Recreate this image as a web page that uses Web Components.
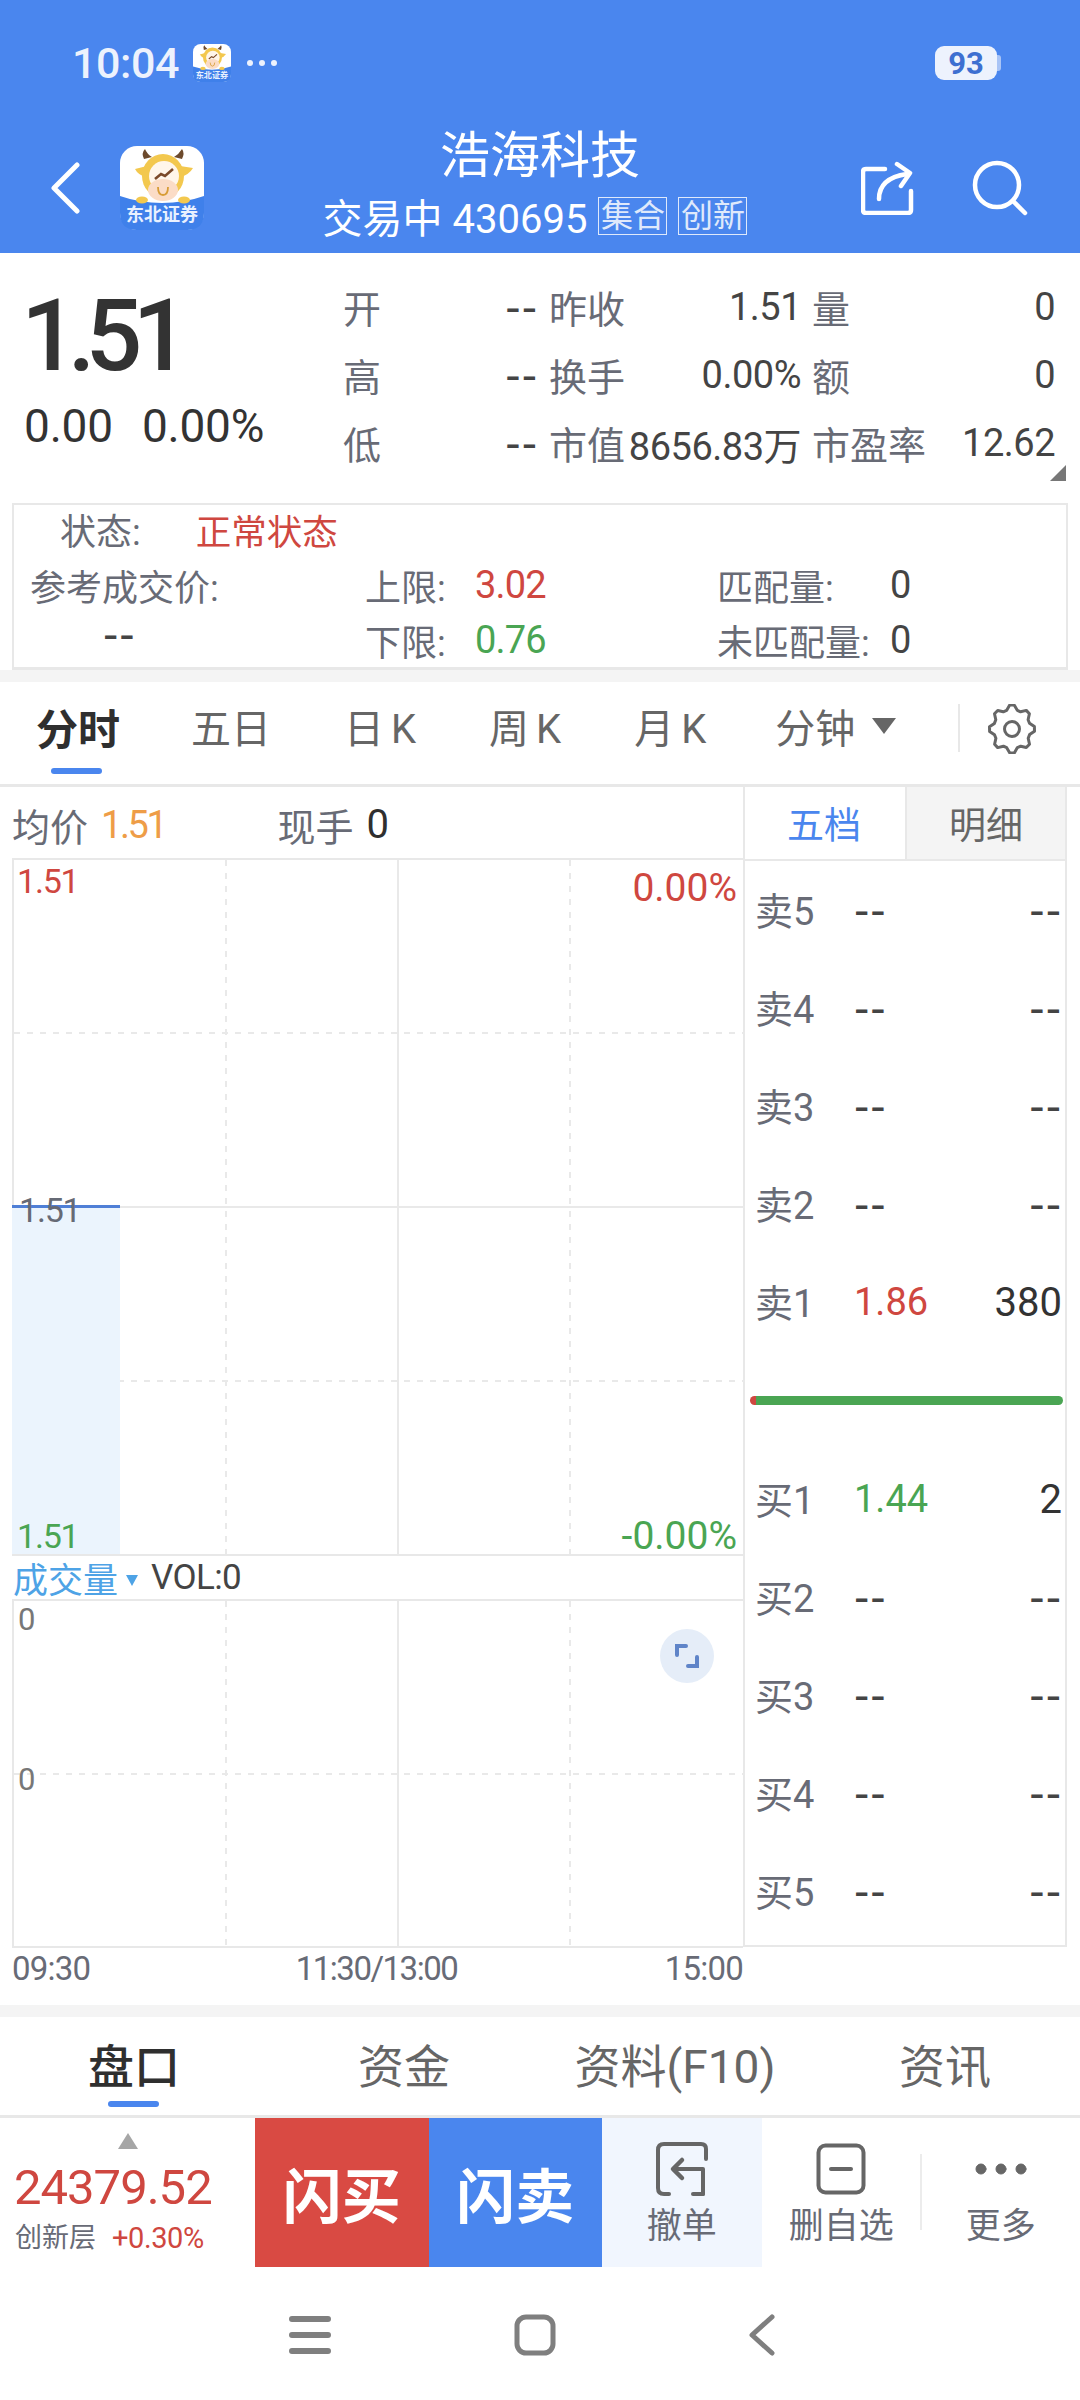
<!DOCTYPE html>
<html lang="zh">
<head>
<meta charset="utf-8">
<title>浩海科技</title>
<style>
    html, body { margin: 0; padding: 0; background: #fff; }
    body {
        width: 1080px;
        height: 2400px;
        overflow: hidden;
        font-family: Roboto, "Noto Sans CJK SC", sans-serif;
        color: #333;
        --blue: #4a86ee;
        --red: #cf4740;
        --green: #4aa553;
        --muted: #686b76;
        --line: #e8e8e8;
        --band: #f4f4f4;
    }
</style>
</head>
<body>
<stock-header></stock-header>
<quote-panel></quote-panel>
<state-box></state-box>
<period-tabs></period-tabs>
<market-board></market-board>
<info-tabs></info-tabs>
<action-bar></action-bar>
<nav-bar></nav-bar>

<script>
(function () {
    const DASH = "font-family:'Liberation Sans',sans-serif;font-size:46px;letter-spacing:1px;color:#444;";

    class Base extends HTMLElement {
        constructor() {
            super();
            this.attachShadow({ mode: "open" });
        }

        connectedCallback() {
            this.shadowRoot.innerHTML = this.render();
        }
    }

    class BrokerLogo extends Base {
        render() {
            return `
                <style>
                    :host { display: block; width: var(--size, 84px); height: var(--size, 84px); flex: none; }
                    svg { display: block; width: 100%; height: 100%; }
                </style>
                <svg viewBox="0 0 84 84">
                    <rect width="84" height="84" rx="17" fill="#fff"/>
                    <path d="M0 50 Q20 57 42 57 Q64 57 84 50 V67 Q84 84 67 84 H17 Q0 84 0 67 Z" fill="#3f80ea"/>
                    <path d="M24 13 Q21 7 25 3 Q27 8 32 11 Z M62 13 Q65 7 62 3 Q59 8 54 11 Z" fill="#6d4a2c"/>
                    <path d="M15 23 L27 20 L26 31 Q18 29 15 23 Z M73 22 L60 20 L60 31 Q69 29 73 22 Z" fill="#f3c84e"/>
                    <ellipse cx="43" cy="30" rx="21" ry="22" fill="#f3c84e"/>
                    <ellipse cx="44" cy="30" rx="15" ry="15" fill="#fff6ea"/>
                    <path d="M35 33 L41 28 L45 30 L53 23" fill="none" stroke="#7b4a2a" stroke-width="2.6"/>
                    <ellipse cx="43" cy="44" rx="15" ry="11" fill="#fbdcc6"/>
                    <path d="M38 41 Q38 49 43 49 Q48 49 48 41" fill="none" stroke="#d79c35" stroke-width="1.8"/>
                    <ellipse cx="22" cy="54" rx="6" ry="3.5" fill="#f3c84e"/>
                    <ellipse cx="64" cy="54" rx="6" ry="3.5" fill="#f3c84e"/>
                    <text x="42" y="75" text-anchor="middle" font-size="18" font-weight="700" fill="#e9f1ff" font-family="Noto Sans CJK SC, sans-serif">东北证券</text>
                </svg>
            `;
        }
    }

    class StockHeader extends Base {
        render() {
            return `
                <style>
                    :host { display: block; height: 253px; background: var(--blue); color: #fff; box-sizing: border-box; padding-top: 44px; }
                    .status { display: flex; align-items: center; height: 38px; padding-left: 72px; color: #edf2fd; }
                    .time { font-size: 43px; font-weight: 500; letter-spacing: -0.4px; width: 121px; }
                    .status broker-logo { --size: 38px; }
                    .dots { display: flex; gap: 6px; margin-left: 16px; }
                    .dots i { width: 6px; height: 6px; border-radius: 50%; background: #edf2fd; }
                    .battery { margin-left: auto; margin-right: 83px; position: relative; width: 62px; height: 34px; border-radius: 9px; background: #edf2fd; color: #3d6fd1; font-size: 31px; font-weight: 700; display: flex; align-items: center; justify-content: center; }
                    .battery::after { content: ""; position: absolute; right: -4px; top: 9px; width: 4px; height: 16px; border-radius: 0 3px 3px 0; background: #a9c4f6; }
                    .bar { display: grid; grid-template-columns: 300px 1fr 300px; margin-top: 40px; }
                    .left { display: flex; align-items: center; padding: 18px 0 0 50px; gap: 40px; }
                    .title { text-align: center; }
                    .name { font-size: 50px; line-height: 62px; margin-top: 3px; }
                    .sub { display: flex; align-items: center; justify-content: center; margin-top: 9px; height: 40px; font-size: 40px; white-space: nowrap; margin-left: -10px; }
                    .tag { font-size: 32px; line-height: 36px; width: 69px; text-align: center; border: 1.5px solid #dfe9fb; box-sizing: border-box; height: 38px; margin-left: 11px; color: #dfe9fb; }
                    .right { display: flex; align-items: center; justify-content: flex-end; padding: 18px 52px 0 0; gap: 57px; }
                    svg { display: block; fill: none; stroke: #fff; stroke-linecap: round; stroke-linejoin: round; }
                </style>
                <div class="status">
                    <span class="time">10:04</span>
                    <broker-logo></broker-logo>
                    <span class="dots"><i></i><i></i><i></i></span>
                    <span class="battery">93</span>
                </div>
                <div class="bar">
                    <div class="left">
                        <svg width="30" height="52" viewBox="0 0 30 52" stroke-width="5"><path d="M27 3 L4 26 L27 49"/></svg>
                        <broker-logo></broker-logo>
                    </div>
                    <div class="title">
                        <div class="name">浩海科技</div>
                        <div class="sub">交易中 430695<span class="tag">集合</span><span class="tag">创新</span></div>
                    </div>
                    <div class="right">
                        <svg width="54" height="54" viewBox="0 0 54 54" stroke-width="4.5"><path d="M24 8 H5 Q2 8 2 11 V49 Q2 52 5 52 H47 Q50 52 50 49 V30"/><path d="M18 38 Q18 17 46 13"/><path d="M36 3 L49 12 L40 25"/></svg>
                        <svg width="56" height="56" viewBox="0 0 56 56" stroke-width="4.5"><circle cx="25" cy="25" r="22"/><path d="M41 41 L53 53"/></svg>
                    </div>
                </div>
            `;
        }
    }

    class QuotePanel extends Base {
        render() {
            const rows = [
                ["开", "--", "昨收", "1.51", "量", "0"],
                ["高", "--", "换手", "0.00%", "额", "0"],
                ["低", "--", "市值", "8656.83万", "市盈率", "12.62"]
            ];
            const val = (v) => (v === "--" ? `<b style="${DASH}">--</b>` : `<b>${v}</b>`);
            const cells = rows.map((r) => `
                <div class="c"><span>${r[0]}</span>${val(r[1])}</div>
                <div class="c"><span>${r[2]}</span>${val(r[3])}</div>
                <div class="c"><span>${r[4]}</span>${val(r[5])}</div>
            `).join("");
            return `
                <style>
                    :host { display: flex; height: 250px; box-sizing: border-box; position: relative; }
                    .now { width: 343px; flex: none; padding: 38px 0 0 24px; box-sizing: border-box; color: #333; }
                    .price { font-size: 100px; line-height: 90px; font-weight: 500; letter-spacing: -10px; margin-left: -3px; }
                    .chg { margin-top: 20px; font-size: 46px; line-height: 50px; letter-spacing: -0.2px; display: flex; gap: 29px; }
                    .grid { display: grid; grid-template-columns: 195px 252px 243px; column-gap: 11px; grid-auto-rows: 68px; padding-top: 20px; }
                    .c { display: flex; justify-content: space-between; align-items: center; font-size: 38px; color: var(--muted); white-space: nowrap; }
                    .c span { margin-top: -2px; }
                    .c b { font-weight: 400; color: #444; letter-spacing: -0.5px; }
                    .mark { position: absolute; right: 14px; top: 212px; width: 0; height: 0; border-left: 16px solid transparent; border-bottom: 16px solid #777; }
                </style>
                <div class="now">
                    <div class="price">1.51</div>
                    <div class="chg"><span>0.00</span><span>0.00%</span></div>
                </div>
                <div class="grid">${cells}</div>
                <i class="mark"></i>
            `;
        }
    }

    class StateBox extends Base {
        render() {
            return `
                <style>
                    :host { display: block; margin: 0; background: linear-gradient(#fff 167px, var(--band) 167px); height: 179px; padding: 0 12px; box-sizing: border-box; }
                    .box { height: 167px; border: 2px solid var(--line); border-bottom-width: 3px; box-sizing: border-box; font-size: 36px; color: var(--muted); display: grid; grid-template-columns: 351px 352px 1fr; grid-template-rows: 48px 63px 47px; white-space: nowrap; }
                    .box > div { display: flex; align-items: center; }
                    .state { grid-column: 1 / 4; padding-left: 46px; }
                    .state b { margin-left: 55px; font-weight: 400; color: var(--red); font-size: 35.5px; }
                    .a { padding-left: 16px; }
                    .dash { padding: 0 0 12px 89px; }
                    .l span:first-child { width: 110px; }
                    .m span:first-child { width: 173px; }
                    .n { letter-spacing: -0.8px; font-size: 38px; }
                    .red { color: var(--red); }
                    .green { color: var(--green); }
                    .dark { color: #444; }
                </style>
                <div class="box">
                    <div class="state">状态:<b>正常状态</b></div>
                    <div class="a">参考成交价:</div>
                    <div class="l"><span>上限:</span><span class="n red">3.02</span></div>
                    <div class="m"><span>匹配量:</span><span class="n dark">0</span></div>
                    <div class="dash"><span style="${DASH}">--</span></div>
                    <div class="l"><span>下限:</span><span class="n green">0.76</span></div>
                    <div class="m"><span>未匹配量:</span><span class="n dark">0</span></div>
                </div>
            `;
        }
    }

    class PeriodTabs extends Base {
        gear() {
            const pts = [];
            for (let i = 0; i < 32; i++) {
                const a = (i / 32) * Math.PI * 2 - Math.PI / 2;
                const r = i % 4 === 0 || i % 4 === 1 ? 24 : 19.5;
                pts.push((25 + Math.cos(a - 0.1) * r * 0.94).toFixed(1) + "," + (25 + Math.sin(a - 0.1) * r).toFixed(1));
            }
            return `<svg width="50" height="50" viewBox="0 0 50 50" fill="none" stroke="#666" stroke-width="3" stroke-linejoin="round"><polygon points="${pts.join(" ")}"/><circle cx="25" cy="25" r="7.5"/></svg>`;
        }

        render() {
            return `
                <style>
                    :host { display: flex; align-items: center; height: 105px; box-sizing: border-box; border-bottom: 3px solid var(--line); padding: 0 0 14px 36px; font-size: 40px; color: #666; position: relative; white-space: nowrap; }
                    span { display: block; }
                    .on { color: #2f2f2f; font-weight: 700; font-size: 42px; width: 84px; position: relative; }
                    .on::after { content: ""; position: absolute; left: 15px; top: 72px; width: 51px; height: 6px; border-radius: 3px; background: var(--blue); }
                    .k { letter-spacing: 7px; }
                    .caret { margin-left: 17px; border: 12px solid transparent; border-top: 16px solid #666; border-bottom: 0; }
                    .sep { width: 2px; height: 48px; background: var(--line); margin-left: 62px; margin-top: 4px; }
                    svg { display: block; margin: 5px 0 0 27px; }
                </style>
                <span class="on">分时</span>
                <span style="margin-left:71px">五日</span>
                <span class="k" style="margin-left:73px">日K</span>
                <span class="k" style="margin-left:66px">周K</span>
                <span class="k" style="margin-left:66px">月K</span>
                <span style="margin-left:62px">分钟</span>
                <i class="caret"></i>
                <i class="sep"></i>
                ${this.gear()}
            `;
        }
    }

    class ChartGrid extends Base {
        render() {
            const h = Number(this.getAttribute("height"));
            const lines = (this.getAttribute("rows") || "").split(",").filter(Boolean).map((v) => {
                const [y, kind] = v.split(":");
                return `<line x1="0" x2="731" y1="${y}" y2="${y}" ${kind === "d" ? 'stroke-dasharray="6 7"' : ""}/>`;
            }).join("");
            return `
                <style>
                    :host { display: block; position: relative; height: ${h}px; font-size: 33px; }
                    svg { position: absolute; left: 0; top: 0; display: block; }
                    ::slotted(*) { position: absolute; }
                </style>
                <svg width="731" height="${h}" stroke="#e9e9e9" stroke-width="2">
                    <line x1="212" x2="212" y1="0" y2="${h}" stroke-dasharray="6 7"/>
                    <line x1="384" x2="384" y1="0" y2="${h}"/>
                    <line x1="556" x2="556" y1="0" y2="${h}" stroke-dasharray="6 7"/>
                    ${lines}
                </svg>
                <slot></slot>
            `;
        }
    }

    class TrendPanel extends Base {
        render() {
            return `
                <style>
                    :host { display: block; width: 743px; flex: none; box-sizing: border-box; padding-left: 12px; }
                    .head { display: flex; align-items: center; height: 71px; padding-top: 4px; box-sizing: border-box; font-size: 38px; color: var(--muted); }
                    .head b { font-weight: 400; letter-spacing: -2.4px; }
                    .avg { color: #ee9d47; margin-left: 13px; }
                    .hand { margin-left: 112px; }
                    .qty { color: #2f2f2f; margin-left: 13px; font-size: 40px; }
                    .frame { border-top: 2px solid var(--line); border-bottom: 2px solid var(--line); border-left: 2px solid var(--line); }
                    .vol { display: flex; align-items: center; height: 43px; font-size: 35px; color: #444; white-space: nowrap; }
                    .vol b { font-weight: 400; color: #4ea3e6; margin-left: 1px; }
                    .vol i { margin: 6px 13px 0 8px; border: 6px solid transparent; border-top: 11px solid #4ea3e6; border-bottom: 0; }
                    .vol span { letter-spacing: -0.6px; }
                    .axis { display: flex; justify-content: space-between; font-size: 33px; color: var(--muted); height: 40px; align-items: center; letter-spacing: -0.8px; }
                    .axis .mid { letter-spacing: -1.5px; margin-left: -2px; }
                    .fill { left: -2px; top: 348px; width: 108px; height: 346px; background: #ebf4fd; }
                    .line { left: -2px; top: 345px; width: 108px; height: 3px; background: #4f7fd6; }
                    .t { line-height: 40px; letter-spacing: -1.2px; white-space: nowrap; font-size: 34px; }
                    .pct { font-size: 39px; letter-spacing: 0; }
                    .red { color: var(--red); }
                    .green { color: var(--green); }
                    .btn { left: 646px; top: 28px; width: 54px; height: 54px; border-radius: 50%; background: #e5edf8; display: flex; align-items: center; justify-content: center; }
                </style>
                <div class="head">均价<b class="avg">1.51</b><span class="hand">现手</span><b class="qty">0</b></div>
                <chart-grid class="frame" height="694" rows="173:d,347:s,521:d">
                    <i class="fill" style="position:absolute"></i>
                    <i class="line" style="position:absolute"></i>
                    <span class="t red" style="left:3px;top:1px">1.51</span>
                    <span class="t red pct" style="right:6px;top:8px">0.00%</span>
                    <span class="t" style="left:5px;top:330px;color:#666a75">1.51</span>
                    <span class="t green" style="left:3px;top:656px">1.51</span>
                    <span class="t green pct" style="right:6px;top:656px">-0.00%</span>
                </chart-grid>
                <div class="vol"><b>成交量</b><i></i><span>VOL:0</span></div>
                <chart-grid class="frame" height="345" rows="173:d">
                    <span class="t" style="left:4px;top:-1px;font-size:31px;color:#777">0</span>
                    <span class="t" style="left:4px;top:159px;font-size:31px;color:#777">0</span>
                    <span class="btn" style="position:absolute"><svg width="26" height="26" viewBox="0 0 26 26" fill="none" stroke="#5f84c8" stroke-width="4" stroke-linecap="round"><path d="M3 12 V3 H12"/><path d="M23 14 V23 H14"/></svg></span>
                </chart-grid>
                <div class="axis"><span>09:30</span><span class="mid">11:30/13:00</span><span>15:00</span></div>
            `;
        }
    }

    class BookRow extends Base {
        render() {
            const tone = this.getAttribute("tone") || "";
            const price = this.getAttribute("price");
            const qty = this.getAttribute("qty");
            return `
                <style>
                    :host { display: flex; align-items: center; height: 98px; padding: 0 3px 0 10px; font-size: 40px; color: #333; white-space: nowrap; }
                    .l { width: 99px; color: var(--muted); font-size: 38px; margin-top: -4px; }
                    .p { flex: 1; color: ${tone ? `var(--${tone})` : "#444"}; font-size: 38px; }
                </style>
                <span class="l">${this.getAttribute("label")}</span>
                <span class="p">${price || `<span style="${DASH}">--</span>`}</span>
                <span>${qty || `<span style="${DASH}">--</span>`}</span>
            `;
        }
    }

    class OrderBook extends Base {
        render() {
            return `
                <style>
                    :host { display: block; width: 324px; flex: none; height: 1160px; box-sizing: border-box; border-left: 2px solid var(--line); border-right: 2px solid var(--line); border-bottom: 2px solid var(--line); }
                    .tabs { display: grid; grid-template-columns: 160px 1fr; height: 72px; font-size: 37px; border-bottom: 2px solid var(--line); }
                    .tabs span { display: flex; align-items: center; justify-content: center; }
                    .a { color: var(--blue); padding-right: 2px; }
                    .b { background: var(--band); color: #666; border-left: 2px solid var(--line); }
                    .mid { height: 99px; display: flex; align-items: center; padding-left: 5px; }
                    .bar { width: 313px; height: 9px; border-radius: 5px; background: linear-gradient(90deg, var(--red) 6px, var(--green) 6px); }
                </style>
                <div class="tabs"><span class="a">五档</span><span class="b">明细</span></div>
                <book-row label="卖5"></book-row>
                <book-row label="卖4"></book-row>
                <book-row label="卖3"></book-row>
                <book-row label="卖2"></book-row>
                <book-row label="卖1" price="1.86" qty="380" tone="red"></book-row>
                <div class="mid"><div class="bar"></div></div>
                <book-row label="买1" price="1.44" qty="2" tone="green"></book-row>
                <book-row label="买2"></book-row>
                <book-row label="买3"></book-row>
                <book-row label="买4"></book-row>
                <book-row label="买5"></book-row>
            `;
        }
    }

    class MarketBoard extends Base {
        render() {
            return `
                <style>
                    :host { display: flex; align-items: flex-start; height: 1218px; background: #fff; }
                </style>
                <trend-panel></trend-panel>
                <order-book></order-book>
            `;
        }
    }

    class InfoTabs extends Base {
        render() {
            return `
                <style>
                    :host { display: grid; grid-template-columns: 268px 272px 270px 270px; height: 112px; box-sizing: border-box; border-top: 12px solid var(--band); border-bottom: 2px solid var(--line); font-size: 46px; color: #666; text-align: center; padding-top: 22px; }
                    span { display: block; white-space: nowrap; line-height: 56px; }
                    .on { color: #2f2f2f; font-weight: 500; position: relative; }
                    .on::after { content: ""; position: absolute; left: 108px; top: 62px; width: 51px; height: 6px; border-radius: 3px; background: var(--blue); }
                </style>
                <span class="on">盘口</span><span>资金</span><span>资料(F10)</span><span>资讯</span>
            `;
        }
    }

    class ActionBar extends Base {
        render() {
            return `
                <style>
                    :host { display: flex; height: 150px; box-sizing: border-box; border-top: 1px solid var(--line); color: var(--muted); white-space: nowrap; }
                    .idx { width: 255px; flex: none; padding: 15px 0 0 14px; box-sizing: border-box; position: relative; }
                    .up { display: block; width: 0; height: 0; margin-left: 104px; border: 10px solid transparent; border-bottom: 16px solid #a6a6a6; border-top: 0; }
                    .val { color: var(--red); font-size: 49px; line-height: 60px; margin-top: 9px; letter-spacing: -1px; }
                    .meta { font-size: 27px; line-height: 36px; margin-top: 2px; padding-left: 1px; display: flex; gap: 16px; }
                    .meta b { font-weight: 400; color: var(--red); font-size: 29px; letter-spacing: -0.4px; }
                    .trade { width: 173.5px; flex: none; display: flex; align-items: center; justify-content: center; color: #fff; font-size: 59px; font-weight: 700; }
                    .tool { width: 159.5px; flex: none; display: flex; flex-direction: column; align-items: center; font-size: 35px; position: relative; }
                    .icon { height: 72px; margin-top: 15px; display: flex; align-items: center; justify-content: center; }
                    .tool span { line-height: 42px; margin-top: 1px; }
                    .sep::before { content: ""; position: absolute; left: -1px; top: 36px; width: 2px; height: 76px; background: #ececec; }
                    svg { display: block; fill: none; stroke: #666; stroke-linecap: round; stroke-linejoin: round; }
                </style>
                <div class="idx">
                    <i class="up"></i>
                    <div class="val">24379.52</div>
                    <div class="meta"><span>创新层</span><b>+0.30%</b></div>
                </div>
                <div class="trade" style="background:#d94a43">闪买</div>
                <div class="trade" style="background:var(--blue)">闪卖</div>
                <div class="tool" style="background:#f1f6fe">
                    <div class="icon"><svg width="54" height="56" viewBox="0 0 54 56" stroke-width="4"><path d="M51 18 V8 Q51 3 46 3 H9 Q3 3 3 9 V47 Q3 53 9 53 H14"/><path d="M48 53 V28 H20"/><path d="M27 19 L18 28 L27 37" stroke-width="4.5"/><path d="M48 53 H38"/></svg></div>
                    <span>撤单</span>
                </div>
                <div class="tool">
                    <div class="icon"><svg width="50" height="52" viewBox="0 0 50 52" stroke-width="4"><rect x="2.5" y="2.5" width="45" height="47" rx="7"/><path d="M15 26 H35"/></svg></div>
                    <span>删自选</span>
                </div>
                <div class="tool sep">
                    <div class="icon"><svg width="52" height="12" viewBox="0 0 52 12" stroke="none"><circle cx="6" cy="6" r="5" fill="#666"/><circle cx="26" cy="6" r="5" fill="#666"/><circle cx="46" cy="6" r="5" fill="#666"/></svg></div>
                    <span>更多</span>
                </div>
            `;
        }
    }

    class NavBar extends Base {
        render() {
            return `
                <style>
                    :host { display: flex; align-items: center; height: 133px; padding: 2px 0 0 289px; box-sizing: border-box; }
                    svg { display: block; fill: none; stroke: #7f7f7f; stroke-linecap: round; stroke-linejoin: round; }
                </style>
                <svg width="42" height="40" viewBox="0 0 42 40" stroke-width="6"><path d="M3 4 H39 M3 20 H39 M3 36 H39"/></svg>
                <svg style="margin-left:183px" width="42" height="42" viewBox="0 0 42 42" stroke-width="5"><rect x="3" y="3" width="36" height="36" rx="9"/></svg>
                <svg style="margin-left:192px" width="28" height="42" viewBox="0 0 28 42" stroke-width="5"><path d="M24 3 L4 21 L24 39"/></svg>
            `;
        }
    }

    customElements.define("broker-logo", BrokerLogo);
    customElements.define("stock-header", StockHeader);
    customElements.define("quote-panel", QuotePanel);
    customElements.define("state-box", StateBox);
    customElements.define("period-tabs", PeriodTabs);
    customElements.define("chart-grid", ChartGrid);
    customElements.define("trend-panel", TrendPanel);
    customElements.define("book-row", BookRow);
    customElements.define("order-book", OrderBook);
    customElements.define("market-board", MarketBoard);
    customElements.define("info-tabs", InfoTabs);
    customElements.define("action-bar", ActionBar);
    customElements.define("nav-bar", NavBar);
})();
</script>
</body>
</html>
